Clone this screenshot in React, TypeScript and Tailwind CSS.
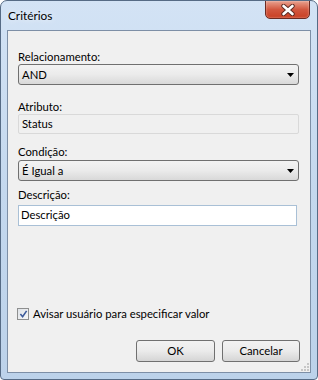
import React from "react";

const font = { fontFamily: "Lato, 'Noto Sans', 'Liberation Sans', sans-serif" };

function Arrow() {
  return (
    <svg width="7" height="4" viewBox="0 0 7 4" className="shrink-0">
      <path d="M0 0 H7 L3.5 4 Z" fill="#000" />
    </svg>
  );
}

function Select({ value }: { value: string }) {
  return (
    <div className="ml-[10px] w-[281px] h-[21px] rounded-[3px] border border-[#707070] bg-gradient-to-b from-[#f3f3f3] via-[#ebebeb] to-[#d9d9d9] flex items-center justify-between pl-[3px] pr-[4px] text-[11.3px] text-black">
      <span className="leading-[15px]">{value}</span>
      <Arrow />
    </div>
  );
}

function Label({ children, className }: { children: React.ReactNode; className: string }) {
  return <div className={`ml-[10px] h-[15px] leading-[15px] text-[11.3px] text-[#000] ${className}`}>{children}</div>;
}

export default function App() {
  return (
    <div style={font} className="w-[318px] h-[380px] flex flex-col rounded-t-[7px] rounded-b-[4px] border border-[#566b85] bg-gradient-to-b from-[#d3e3f5] via-[#c4d8ee] to-[#bcd2ea] overflow-hidden">
      {/* title bar */}
      <div className="h-[29px] shrink-0 flex items-start justify-between">
        <div className="pt-[7px] pl-[7px] text-[11.8px] leading-[15px] text-black [text-shadow:0_0_6px_#fff]">Critérios</div>
        <div className="mr-[7px] w-[45px] h-[19px] -mt-px rounded-b-[5px] border border-[#6c2b22] bg-gradient-to-b from-[#e8a08e] via-[#d2573f] to-[#c93f22] flex items-center justify-center shadow-[inset_0_0_2px_rgba(255,255,255,0.6)]">
          <svg width="14" height="12" viewBox="0 0 14 12">
            <path d="M2.5 2 L11.5 10 M11.5 2 L2.5 10" stroke="#5a2a22" strokeWidth="4.4" strokeLinecap="round" />
            <path d="M2.5 2 L11.5 10 M11.5 2 L2.5 10" stroke="#fff" strokeWidth="2.6" strokeLinecap="round" />
          </svg>
        </div>
      </div>
      {/* client area */}
      <div className="ml-[6px] mr-[6px] mb-[6px] flex-1 border border-[#7d8fa6] bg-[#f0f0f0] flex flex-col relative">
        <Label className="mt-[18px]">Relacionamento:</Label>
        <Select value="AND" />
        <Label className="mt-[14px]">Atributo:</Label>
        <div className="ml-[10px] w-[281px] h-[20px] rounded-[2px] border border-[#d9d9d9] bg-[#f0f0f0] flex items-center pl-[3px] text-[11.3px] text-black">
          Status
        </div>
        <Label className="mt-[10px] mb-px">Condição:</Label>
        <Select value="É Igual a" />
        <Label className="mt-[6px]">Descrição:</Label>
        <div className="ml-[10px] mt-[3px] w-[279px] h-[21px] border border-[#a9c0d6] bg-white flex items-center pl-[2px] text-[11.3px] text-black">
          Descrição
        </div>
        <div className="ml-[9px] mt-[80px] flex items-center gap-[4px] h-[15px]">
          <div className="w-[12px] h-[12px] border border-[#8e8f8f] bg-gradient-to-br from-[#dfe3e8] to-[#f6f6f6] flex items-center justify-center">
            <svg width="9" height="8" viewBox="0 0 10 9">
              <path d="M1.5 4.5 L4 7.5 L8.5 1" stroke="#3c5a9a" strokeWidth="1.8" fill="none" />
            </svg>
          </div>
          <span className="text-[11.3px] leading-[15px] text-black">Avisar usuário para especificar valor</span>
        </div>
        <div className="mt-[19px] flex justify-end gap-[7px] pr-[10px]">
          <div className="w-[79px] h-[22px] rounded-[3px] border border-[#707070] bg-gradient-to-b from-[#f2f2f2] via-[#ebebeb] to-[#d5d5d5] flex items-center justify-center text-[11.3px] text-black">
            OK
          </div>
          <div className="w-[78px] h-[22px] rounded-[3px] border border-[#707070] bg-gradient-to-b from-[#f2f2f2] via-[#ebebeb] to-[#d5d5d5] flex items-center justify-center text-[11.3px] text-black">
            Cancelar
          </div>
        </div>
        <svg width="9" height="9" viewBox="0 0 9 9" className="absolute right-[1px] bottom-[1px]">
          <rect x="7" y="1" width="2" height="2" fill="#c6c6c6" />
          <rect x="4" y="4" width="2" height="2" fill="#c6c6c6" />
          <rect x="7" y="4" width="2" height="2" fill="#c6c6c6" />
          <rect x="1" y="7" width="2" height="2" fill="#c6c6c6" />
          <rect x="4" y="7" width="2" height="2" fill="#c6c6c6" />
          <rect x="7" y="7" width="2" height="2" fill="#c6c6c6" />
        </svg>
      </div>
    </div>
  );
}
